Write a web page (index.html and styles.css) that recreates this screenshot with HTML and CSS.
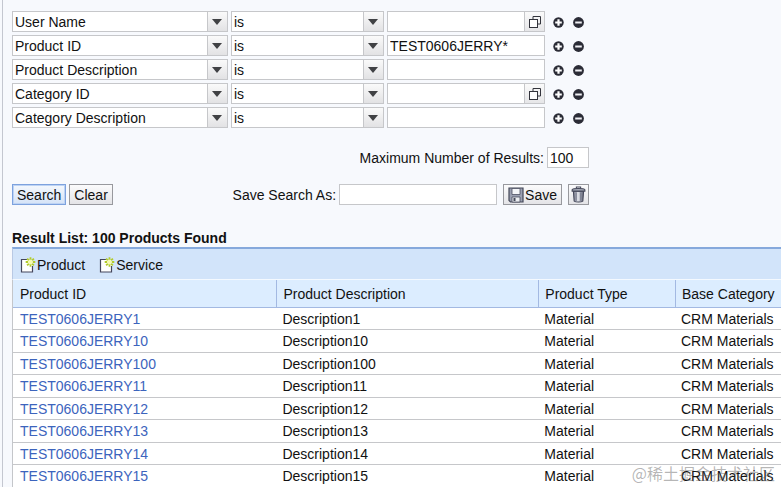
FILE: index.html
```html
<!DOCTYPE html>
<html lang="en">
<head>
    <meta charset="UTF-8">
    <meta name="viewport" content="width=device-width, initial-scale=1.0">
    <title>Product Search</title>
    <link rel="stylesheet" href="styles.css">
</head>
<body>
    <svg class="icon-defs" aria-hidden="true">
        <linearGradient id="bin" x2="1" y2="0">
            <stop stop-color="#6d7182" />
            <stop offset=".45" stop-color="#e6e8ee" />
            <stop offset="1" stop-color="#5c6072" />
        </linearGradient>
        <symbol id="icon-plus" viewBox="0 0 11 11">
            <circle cx="5.5" cy="5.5" r="5.2" fill="#2b2c36" />
            <path d="M5.5 2.2v6.6M2.2 5.5h6.6" stroke="#fff" stroke-width="2.2" />
        </symbol>
        <symbol id="icon-minus" viewBox="0 0 11 11">
            <circle cx="5.5" cy="5.5" r="5.4" fill="#2b2c36" />
            <path d="M2.2 5.5h6.6" stroke="#f0f0f4" stroke-width="2" />
        </symbol>
        <symbol id="icon-help" viewBox="0 0 12 12">
            <path d="M4 3.5v-3h7.5V8H8.5" fill="none" stroke="#33343c" />
            <rect x=".5" y="3.5" width="8" height="8" fill="#fff" stroke="#33343c" />
        </symbol>
        <symbol id="icon-new" viewBox="0 0 16 16">
            <path d="M1.5 2.5h7l4 4v8.5h-11z" fill="#fff" />
            <path d="M7.5 2.5h-6v12.5h11V9" fill="none" stroke="#44465c" stroke-width="1.2" />
            <path d="M10.5 .2v9.6M5.7 5h9.6M7.1 1.6l6.8 6.8M13.9 1.6L7.1 8.4" stroke="#b3cb2c" stroke-width="1.8" stroke-dasharray="2.6 4.4 2.6 9" />
            <circle cx="10.5" cy="5" r="2.3" fill="#f7fbb0" />
        </symbol>
        <symbol id="icon-save" viewBox="0 0 16 16">
            <path d="M1 1h14v14H2.5L1 13.5z" fill="#9ba0b1" stroke="#454959" stroke-width="1.2" />
            <path d="M4 1.5h8v6H4z" fill="#f4f5f8" stroke="#4b4f61" stroke-width=".8" />
            <path d="M4 10h8v5H4z" fill="#eceef2" stroke="#4b4f61" stroke-width=".8" />
            <path d="M5.5 11h2v3h-2z" fill="#454959" />
        </symbol>
        <symbol id="icon-trash" viewBox="0 0 14 16">
            <path d="M2.2 5h9.6l-.7 9.2c-1.6 1.2-6.6 1.2-8.2 0z" fill="url(#bin)" stroke="#45485a" />
            <path d="M4.8 6v8M9.2 6v8" stroke="#62667a" stroke-width=".8" />
            <path d="M5 2.5V1h4v1.5" fill="none" stroke="#45485a" />
            <path d="M1 4.8V3.5C2 2 12 2 13 3.5v1.3z" fill="#a9adb9" stroke="#45485a" />
        </symbol>
    </svg>

    <main class="page">
        <form class="search-form">
            <div class="criteria">
                <div class="criteria-row">
                    <select class="field" aria-label="Search field 1"><option>User Name</option></select>
                    <select class="field" aria-label="Operator 1"><option>is</option></select>
                    <div class="value-help">
                        <input type="text" class="field" aria-label="Value 1">
                        <button type="button" class="help-button" aria-label="Open value help"><svg><use href="#icon-help" /></svg></button>
                    </div>
                    <div class="row-actions">
                        <button type="button" aria-label="Add line"><svg><use href="#icon-plus" /></svg></button>
                        <button type="button" aria-label="Remove line"><svg><use href="#icon-minus" /></svg></button>
                    </div>
                </div>
                <div class="criteria-row">
                    <select class="field" aria-label="Search field 2"><option>Product ID</option></select>
                    <select class="field" aria-label="Operator 2"><option>is</option></select>
                    <input type="text" class="field" aria-label="Value 2" value="TEST0606JERRY*">
                    <div class="row-actions">
                        <button type="button" aria-label="Add line"><svg><use href="#icon-plus" /></svg></button>
                        <button type="button" aria-label="Remove line"><svg><use href="#icon-minus" /></svg></button>
                    </div>
                </div>
                <div class="criteria-row">
                    <select class="field" aria-label="Search field 3"><option>Product Description</option></select>
                    <select class="field" aria-label="Operator 3"><option>is</option></select>
                    <input type="text" class="field" aria-label="Value 3">
                    <div class="row-actions">
                        <button type="button" aria-label="Add line"><svg><use href="#icon-plus" /></svg></button>
                        <button type="button" aria-label="Remove line"><svg><use href="#icon-minus" /></svg></button>
                    </div>
                </div>
                <div class="criteria-row">
                    <select class="field" aria-label="Search field 4"><option>Category ID</option></select>
                    <select class="field" aria-label="Operator 4"><option>is</option></select>
                    <div class="value-help">
                        <input type="text" class="field" aria-label="Value 4">
                        <button type="button" class="help-button" aria-label="Open value help"><svg><use href="#icon-help" /></svg></button>
                    </div>
                    <div class="row-actions">
                        <button type="button" aria-label="Add line"><svg><use href="#icon-plus" /></svg></button>
                        <button type="button" aria-label="Remove line"><svg><use href="#icon-minus" /></svg></button>
                    </div>
                </div>
                <div class="criteria-row">
                    <select class="field" aria-label="Search field 5"><option>Category Description</option></select>
                    <select class="field" aria-label="Operator 5"><option>is</option></select>
                    <input type="text" class="field" aria-label="Value 5">
                    <div class="row-actions">
                        <button type="button" aria-label="Add line"><svg><use href="#icon-plus" /></svg></button>
                        <button type="button" aria-label="Remove line"><svg><use href="#icon-minus" /></svg></button>
                    </div>
                </div>
            </div>

            <div class="max-results">
                <label for="max-results">Maximum Number of Results:</label>
                <input type="text" id="max-results" class="field" value="100">
            </div>

            <div class="form-actions">
                <button type="submit" class="button primary">Search</button>
                <button type="reset" class="button">Clear</button>
                <div class="save-search">
                    <label for="save-as">Save Search As:</label>
                    <input type="text" id="save-as" class="field">
                    <button type="button" class="button save-button"><svg><use href="#icon-save" /></svg>Save</button>
                    <button type="button" class="button delete-button" aria-label="Delete search"><svg><use href="#icon-trash" /></svg></button>
                </div>
            </div>
        </form>

        <section class="results">
            <h2>Result List: 100 Products Found</h2>
            <div class="toolbar">
                <button type="button"><svg><use href="#icon-new" /></svg>Product</button>
                <button type="button"><svg><use href="#icon-new" /></svg>Service</button>
            </div>
            <table>
                <thead>
                    <tr>
                        <th class="col-id">Product ID</th>
                        <th class="col-description">Product Description</th>
                        <th class="col-type">Product Type</th>
                        <th>Base Category</th>
                    </tr>
                </thead>
                <tbody>
                    <tr><td><a href="#">TEST0606JERRY1</a></td><td>Description1</td><td>Material</td><td>CRM Materials</td></tr>
                    <tr><td><a href="#">TEST0606JERRY10</a></td><td>Description10</td><td>Material</td><td>CRM Materials</td></tr>
                    <tr><td><a href="#">TEST0606JERRY100</a></td><td>Description100</td><td>Material</td><td>CRM Materials</td></tr>
                    <tr><td><a href="#">TEST0606JERRY11</a></td><td>Description11</td><td>Material</td><td>CRM Materials</td></tr>
                    <tr><td><a href="#">TEST0606JERRY12</a></td><td>Description12</td><td>Material</td><td>CRM Materials</td></tr>
                    <tr><td><a href="#">TEST0606JERRY13</a></td><td>Description13</td><td>Material</td><td>CRM Materials</td></tr>
                    <tr><td><a href="#">TEST0606JERRY14</a></td><td>Description14</td><td>Material</td><td>CRM Materials</td></tr>
                    <tr><td><a href="#">TEST0606JERRY15</a></td><td>Description15</td><td>Material</td><td>CRM Materials</td></tr>
                </tbody>
            </table>
        </section>
    </main>
    <div class="watermark">@稀土掘金技术社区</div>
</body>
</html>
```
FILE: styles.css
```css
* {
    box-sizing: border-box;
}
body {
    margin: 0;
    padding-left: 2px;
    background-color: #f7f9fd;
    color: #111;
    font-family: "Liberation Sans", Arial, sans-serif;
    font-size: 14px;
    line-height: 18px;
}
input, select, button {
    margin: 0;
    color: inherit;
    font: inherit;
}
button {
    cursor: pointer;
}
svg {
    display: block;
}
.icon-defs {
    position: absolute;
    width: 0;
    height: 0;
}
.page {
    min-height: 100vh;
    padding: 11px 0 0 9px;
    border-left: 1px solid #c4c7d0;
}

/* search form */
.search-form {
    width: 577px;
    max-width: 100%;
}
.field {
    width: 100%;
    height: 21px;
    padding: 0 2px;
    border: 1px solid #c6c7ca;
    border-radius: 0;
    background-color: #fff;
}
select.field {
    appearance: none;
    background-image: url("data:image/svg+xml,%3Csvg xmlns='http://www.w3.org/2000/svg' width='20' height='19'%3E%3Cdefs%3E%3ClinearGradient id='g' x2='0' y2='1'%3E%3Cstop stop-color='%23fafafa'/%3E%3Cstop offset='1' stop-color='%23e2e2e4'/%3E%3C/linearGradient%3E%3C/defs%3E%3Cpath d='M0 0h20v19H0z' fill='url(%23g)'/%3E%3Cpath d='M0 0h1v19H0z' fill='%23c6c7ca'/%3E%3Cpath d='M5 7h10l-5 6z' fill='%23404144'/%3E%3C/svg%3E");
    background-repeat: no-repeat;
    background-position: right center;
}
.criteria {
    display: grid;
    gap: 3px;
}
.criteria-row {
    display: grid;
    grid-template-columns: 216fr 153fr 158fr 41px;
    gap: 3px;
}
.value-help {
    display: flex;
}
.value-help .field {
    flex: 1;
    min-width: 0;
}
.help-button {
    display: grid;
    place-items: center;
    width: 20px;
    padding: 0;
    border: 1px solid #c6c7ca;
    border-left: 0;
    background-image: linear-gradient(#fafafa, #e6e6e8);
}
.help-button svg {
    width: 12px;
    height: 12px;
}
.row-actions {
    display: flex;
}
.row-actions button {
    display: grid;
    place-items: center;
    width: 20px;
    padding: 2px 0 0;
    border: 0;
    background: none;
}
.row-actions svg {
    width: 11px;
    height: 11px;
}
.max-results {
    display: flex;
    justify-content: flex-end;
    align-items: center;
    gap: 3px;
    margin-top: 19px;
}
.max-results .field {
    width: 42px;
}
.form-actions {
    display: flex;
    align-items: center;
    gap: 3px;
    margin-top: 16px;
}
.button {
    height: 21px;
    padding: 0 4px;
    border: 1px solid #98999e;
    background-image: linear-gradient(#fbfbfc, #e4e4e7);
}
.primary {
    border-color: #7da2de;
    background-image: linear-gradient(#f4f8fd, #d5e3f7);
    box-shadow: inset 0 0 0 1px #bdd3f4;
}
.save-search {
    display: flex;
    align-items: center;
    gap: 6px;
    margin-left: auto;
}
.save-search label {
    margin-right: -3px;
}
.save-search .field {
    width: 158px;
}
.save-button {
    display: flex;
    align-items: center;
    gap: 1px;
}
.save-button svg {
    width: 16px;
    height: 16px;
}
.delete-button {
    width: 21px;
    padding: 0 2px;
}
.delete-button svg {
    width: 15px;
    height: 17px;
}

/* result list */
.results {
    margin-top: 24px;
}
.results h2 {
    margin: 0;
    font-size: 14px;
    line-height: 18px;
}
.toolbar {
    display: flex;
    gap: 14px;
    padding: 7px 7px 5px;
    border-top: 2px solid #86a9dc;
    border-bottom: 1px solid #f4f9ff;
    border-left: 1px solid #b9c9e4;
    background-color: #d2e4fa;
}
.toolbar button {
    display: flex;
    align-items: center;
    gap: 1px;
    padding: 0;
    border: 0;
    background: none;
}
.toolbar svg {
    width: 16px;
    height: 16px;
}
table {
    width: 100%;
    table-layout: fixed;
    border-collapse: separate;
    border-spacing: 0;
    border-left: 1px solid #c4c6ca;
    background-color: #fff;
}
.col-id {
    width: 34.3%;
}
.col-description {
    width: 34.1%;
}
.col-type {
    width: 17.8%;
}
th, td {
    padding: 0 0 0 6px;
    text-align: left;
    white-space: nowrap;
}
th {
    height: 28px;
    border-bottom: 1px solid #a3b9e2;
    background-color: #dcedff;
    font-weight: normal;
}
th + th {
    border-left: 1px solid #a3b9e2;
}
th:first-child, td:first-child {
    padding-left: 7px;
}
td {
    height: 22px;
    border-bottom: 1px solid #c6c7ca;
}
tr:nth-child(even) td {
    height: 23px;
}
td a {
    color: #3c64bd;
    text-decoration: none;
}
td a:hover {
    text-decoration: underline;
}

.watermark {
    position: absolute;
    right: 6px;
    top: 462px;
    color: rgba(90, 90, 90, 0.45);
    font-family: "Noto Sans CJK SC", sans-serif;
    font-size: 16px;
    line-height: 22px;
    pointer-events: none;
}
```
